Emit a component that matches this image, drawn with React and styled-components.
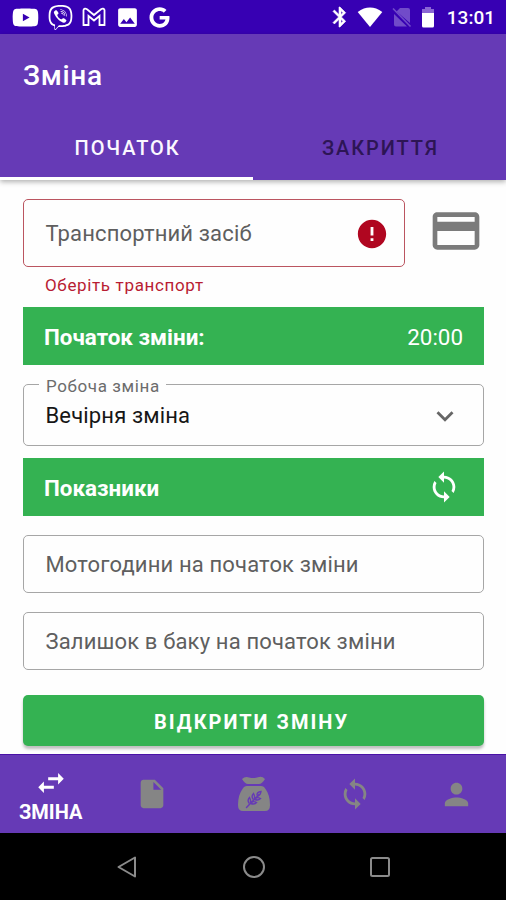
import React from "react";
import styled, { createGlobalStyle } from "styled-components";
import {
  MdBluetooth,
  MdCreditCard,
  MdError,
  MdExpandMore,
  MdImage,
  MdInsertDriveFile,
  MdLoop,
  MdPerson,
  MdSwapHoriz,
} from "react-icons/md";
import { FaGoogle, FaViber, FaYoutube } from "react-icons/fa";

const GlobalStyle = createGlobalStyle`
  * {
    box-sizing: border-box;
  }
  body {
    margin: 0;
    background: #fff;
    font-family: Roboto, "Noto Sans", sans-serif;
  }
  svg {
    display: block;
    flex-shrink: 0;
  }
`;

const Screen = styled.div`
  width: 506px;
  height: 900px;
  display: flex;
  flex-direction: column;
  overflow: hidden;
  background: #fefefe;
`;

const StatusBar = styled.div`
  height: 34px;
  flex-shrink: 0;
  display: flex;
  align-items: center;
  justify-content: space-between;
  padding: 0 11px 0 12px;
  background: #3700b3;
  color: #fff;
`;

const StatusGroup = styled.div`
  display: flex;
  align-items: center;
  gap: ${(props) => props.$gap}px;
`;

const BluetoothIcon = styled(MdBluetooth)`
  margin-right: -4px;

  path:last-child {
    stroke: #fff;
    stroke-width: 0.6px;
  }
`;

const Clock = styled.span`
  margin-left: 3px;
  font-size: 19px;
  font-weight: 500;
  line-height: 34px;
  padding-top: 2px;
`;

const Header = styled.header`
  height: 146px;
  flex-shrink: 0;
  display: flex;
  flex-direction: column;
  justify-content: space-between;
  position: relative;
  background: #663ab6;
  color: #fff;
  box-shadow: 0 2px 5px rgba(0, 0, 0, 0.3);
`;

const Title = styled.h1`
  margin: 0;
  padding: 1px 23px 0;
  font-size: 28px;
  font-weight: 500;
  line-height: 81px;
  letter-spacing: 0.7px;
`;

const Tabs = styled.div`
  display: flex;
  height: 64px;
`;

const Tab = styled.button`
  flex: 1;
  padding: 2px 0 0 2px;
  border: none;
  border-bottom: 3px solid ${(props) => (props.$active ? "#fff" : "transparent")};
  background: none;
  color: ${(props) => (props.$active ? "#fbf8ff" : "#2d1555")};
  font-family: inherit;
  font-size: 20px;
  font-weight: 500;
  letter-spacing: 1.9px;
`;

const Form = styled.main`
  height: 574px;
  flex-shrink: 0;
  display: flex;
  flex-direction: column;
  padding: 19px 22px 0 23px;
`;

const TransportRow = styled.div`
  display: flex;
  gap: 23px;
  color: #7b7b7b;

  > svg {
    margin-top: 4px;
  }
`;

const Field = styled.div`
  height: ${(props) => props.$height}px;
  flex-shrink: 0;
  flex-grow: ${(props) => (props.$grow ? 1 : 0)};
  margin-top: ${(props) => props.$top || 0}px;
  display: flex;
  align-items: center;
  justify-content: space-between;
  padding: 1px ${(props) => props.$right || 15}px 0 21.5px;
  position: relative;
  border: 1.5px solid ${(props) => (props.$error ? "#bb5560" : "#a6a6a6")};
  border-radius: 5px;
  color: ${(props) => (props.$filled ? "#161616" : "#5f5f5f")};
  font-size: 22px;
  letter-spacing: 0.15px;
`;

const FloatingLabel = styled.span`
  position: absolute;
  top: -9px;
  left: 15px;
  padding: 0 6px 0 7px;
  background: #fefefe;
  color: #6c6c6c;
  font-size: 17px;
  line-height: 20px;
  letter-spacing: 0.6px;
`;

const ErrorText = styled.p`
  margin: 0;
  padding-left: 22px;
  height: 40px;
  color: #b81c33;
  font-size: 17px;
  line-height: 37px;
  letter-spacing: 0.65px;
`;

const Section = styled.div`
  height: 58px;
  flex-shrink: 0;
  margin-top: ${(props) => props.$top || 0}px;
  display: flex;
  align-items: center;
  justify-content: space-between;
  padding: 2px ${(props) => props.$right}px 0 21px;
  background: #34b252;
  color: #fff;
  font-size: 22.4px;

  svg {
    margin-top: -3px;
  }
`;

const SectionTitle = styled.span`
  font-weight: 700;
`;

const Submit = styled.button`
  height: 51px;
  flex-shrink: 0;
  margin-top: 25px;
  padding: 2px 4px 0 0;
  border: none;
  border-radius: 5px;
  background: #34b252;
  box-shadow: 0 3px 3px rgba(0, 0, 0, 0.25);
  color: #fff;
  font-family: inherit;
  font-size: 20px;
  font-weight: 700;
  letter-spacing: 2px;
`;

const BottomNav = styled.nav`
  height: 79px;
  flex-shrink: 0;
  display: flex;
  border-top: 1px solid #4a12a6;
  background: #663ab6;
`;

const NavItem = styled.div`
  flex: 1;
  display: flex;
  flex-direction: column;
  align-items: center;
  justify-content: center;
  padding: ${(props) => (props.$active ? "2px 0 0 1px" : "0 0 0 2px")};
  color: ${(props) => (props.$active ? "#fff" : "#858585")};
  font-size: 20px;
  font-weight: 700;
  line-height: 25px;
`;

const SystemNav = styled.div`
  height: 67px;
  flex-shrink: 0;
  display: flex;
  align-items: center;
  justify-content: center;
  gap: 102.5px;
  padding-left: 1px;
  background: #000;
`;

const GmailIcon = () => (
  <svg width="24" height="20" viewBox="0 0 24 20" fill="none" stroke="#fff" strokeWidth="1.8">
    <path d="M1.5 3Q2.500 .7 5 2.200L12 8l7-5.800Q21.500 .7 22.500 3V18H17.500V9L12 13.500 6.500 9V18H1.500z" />
  </svg>
);

const WifiIcon = () => (
  <svg width="26" height="21" viewBox="0 0 26 21" fill="#fff">
    <path d="M.7 5Q13-3.800 25.300 5L13 20z" />
  </svg>
);

const NoSimIcon = () => (
  <svg width="20" height="21" viewBox="0 0 20 21" fill="#714bc9">
    <path d="M8 1h8q2 0 2 2v13L4.500 4.500zM2 7l13 12.500H4q-2 0-2-2z" />
    <path d="M1 1.500l17.500 18" stroke="#714bc9" strokeWidth="1.600" />
  </svg>
);

const BatteryIcon = () => (
  <svg width="14" height="23" viewBox="0 0 14 23">
    <path d="M4 1h6v2h3v4H1V3h3z" fill="#8a66d4" />
    <path d="M1 7h12v13q0 1.500-1.500 1.500h-9Q1 21.500 1 20z" fill="#fff" />
  </svg>
);

const SeedBagIcon = () => (
  <svg width="34" height="36" viewBox="0 0 34 36" fill="#858585">
    <path d="M5 3Q8 .2 12 1.500q5 1.200 9-.3 4-1.500 7 1.800-3 5-6 5H11Q8 8 5 3z" />
    <path d="M10 10h14q3 0 4.500 3 4.500 6 4.500 16 0 6-5 6H6q-5 0-5-6 0-10 4.500-16Q7 10 10 10z" />
    <g fill="none" stroke="#663ab6" strokeWidth="1.400" strokeLinecap="round">
      <path d="M9.500 31.500L22 18.500" />
      <path d="M12 27q-2-3 .5-5.500 1.500 2.500 1 4.500M16 23q-2-3 .5-5.500 1.500 2.500 1 4.500M20 19q0-3 4-3.500-.5 3.500-3 4.500M14 27.500q3 1.500 5.500-1-2.500-1.500-4.500-.5M18 23.500q3 1.500 5.500-1-2.500-1.500-4.500-.5" />
    </g>
  </svg>
);

const BackIcon = () => (
  <svg width="24" height="24" viewBox="0 0 24 24" fill="none" stroke="#8b8b8b" strokeWidth="2">
    <path d="M20 2.500v19L3.500 12z" strokeLinejoin="round" />
  </svg>
);

const HomeIcon = () => (
  <svg width="24" height="24" viewBox="0 0 24 24" fill="none" stroke="#8b8b8b" strokeWidth="2">
    <circle cx="12" cy="12" r="10" />
  </svg>
);

const RecentIcon = () => (
  <svg width="24" height="24" viewBox="0 0 24 24" fill="none" stroke="#8b8b8b" strokeWidth="2">
    <rect x="3" y="3" width="18" height="18" rx="1.500" />
  </svg>
);

const App = () => {
  return (
    <>
      <GlobalStyle />
      <Screen>
        <StatusBar>
          <StatusGroup $gap={9}>
            <FaYoutube size={27} />
            <FaViber size={25} />
            <GmailIcon />
            <MdImage size={25} />
            <FaGoogle size={21} />
          </StatusGroup>
          <StatusGroup $gap={9}>
            <BluetoothIcon size={24} />
            <WifiIcon />
            <NoSimIcon />
            <BatteryIcon />
            <Clock>13:01</Clock>
          </StatusGroup>
        </StatusBar>

        <Header>
          <Title>Зміна</Title>
          <Tabs>
            <Tab $active>ПОЧАТОК</Tab>
            <Tab>ЗАКРИТТЯ</Tab>
          </Tabs>
        </Header>

        <Form>
          <TransportRow>
            <Field $height={68} $grow $error>
              Транспортний засіб
              <MdError size={34} color="#b00620" />
            </Field>
            <MdCreditCard size={56} />
          </TransportRow>
          <ErrorText>Оберіть транспорт</ErrorText>

          <Section $right={21}>
            <SectionTitle>Початок зміни:</SectionTitle>
            <span>20:00</span>
          </Section>

          <Field $height={62} $top={19} $right={21} $filled>
            <FloatingLabel>Робоча зміна</FloatingLabel>
            Вечірня зміна
            <MdExpandMore size={34} color="#666" />
          </Field>

          <Section $top={12} $right={23}>
            <SectionTitle>Показники</SectionTitle>
            <MdLoop size={34} />
          </Section>

          <Field $height={58} $top={19}>
            Мотогодини на початок зміни
          </Field>
          <Field $height={58} $top={19}>
            Залишок в баку на початок зміни
          </Field>

          <Submit>ВІДКРИТИ ЗМІНУ</Submit>
        </Form>

        <BottomNav>
          <NavItem $active>
            <MdSwapHoriz size={34} />
            ЗМІНА
          </NavItem>
          <NavItem>
            <MdInsertDriveFile size={34} />
          </NavItem>
          <NavItem>
            <SeedBagIcon />
          </NavItem>
          <NavItem>
            <MdLoop size={34} />
          </NavItem>
          <NavItem>
            <MdPerson size={35} />
          </NavItem>
        </BottomNav>

        <SystemNav>
          <BackIcon />
          <HomeIcon />
          <RecentIcon />
        </SystemNav>
      </Screen>
    </>
  );
};

export default App;
